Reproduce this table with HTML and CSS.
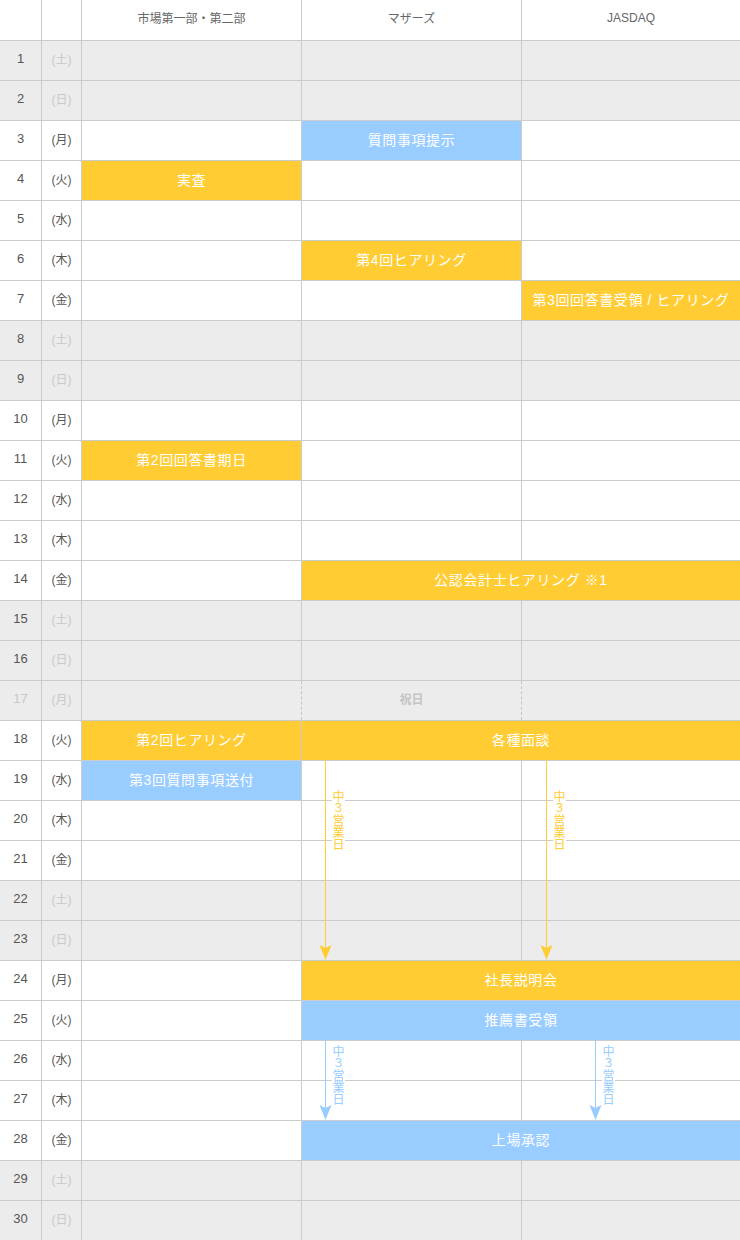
FILE: index.html
```html
<!DOCTYPE html>
<html lang="ja">
<head>
    <meta charset="UTF-8">
    <meta name="viewport" content="width=device-width, initial-scale=1.0">
    <title>上場スケジュール</title>
    <link rel="stylesheet" href="styles.css">
</head>
<body>
    <div id="calendar">
        <div class="row head">
            <div class="cell"></div>
            <div class="cell"></div>
            <div class="cell">市場第一部・第二部</div>
            <div class="cell">マザーズ</div>
            <div class="cell">JASDAQ</div>
        </div>
        <div class="row off">
            <div class="cell day">1</div><div class="cell wd">(土)</div>
            <div class="cell"></div><div class="cell"></div><div class="cell"></div>
        </div>
        <div class="row off">
            <div class="cell day">2</div><div class="cell wd">(日)</div>
            <div class="cell"></div><div class="cell"></div><div class="cell"></div>
        </div>
        <div class="row">
            <div class="cell day">3</div><div class="cell wd">(月)</div>
            <div class="cell"></div><div class="cell blue">質問事項提示</div><div class="cell"></div>
        </div>
        <div class="row">
            <div class="cell day">4</div><div class="cell wd">(火)</div>
            <div class="cell yellow">実査</div><div class="cell"></div><div class="cell"></div>
        </div>
        <div class="row">
            <div class="cell day">5</div><div class="cell wd">(水)</div>
            <div class="cell"></div><div class="cell"></div><div class="cell"></div>
        </div>
        <div class="row">
            <div class="cell day">6</div><div class="cell wd">(木)</div>
            <div class="cell"></div><div class="cell yellow">第4回ヒアリング</div><div class="cell"></div>
        </div>
        <div class="row">
            <div class="cell day">7</div><div class="cell wd">(金)</div>
            <div class="cell"></div><div class="cell"></div><div class="cell yellow">第3回回答書受領 / ヒアリング</div>
        </div>
        <div class="row off">
            <div class="cell day">8</div><div class="cell wd">(土)</div>
            <div class="cell"></div><div class="cell"></div><div class="cell"></div>
        </div>
        <div class="row off">
            <div class="cell day">9</div><div class="cell wd">(日)</div>
            <div class="cell"></div><div class="cell"></div><div class="cell"></div>
        </div>
        <div class="row">
            <div class="cell day">10</div><div class="cell wd">(月)</div>
            <div class="cell"></div><div class="cell"></div><div class="cell"></div>
        </div>
        <div class="row">
            <div class="cell day">11</div><div class="cell wd">(火)</div>
            <div class="cell yellow">第2回回答書期日</div><div class="cell"></div><div class="cell"></div>
        </div>
        <div class="row">
            <div class="cell day">12</div><div class="cell wd">(水)</div>
            <div class="cell"></div><div class="cell"></div><div class="cell"></div>
        </div>
        <div class="row">
            <div class="cell day">13</div><div class="cell wd">(木)</div>
            <div class="cell"></div><div class="cell"></div><div class="cell"></div>
        </div>
        <div class="row">
            <div class="cell day">14</div><div class="cell wd">(金)</div>
            <div class="cell"></div><div class="cell yellow span2">公認会計士ヒアリング ※1</div>
        </div>
        <div class="row off">
            <div class="cell day">15</div><div class="cell wd">(土)</div>
            <div class="cell"></div><div class="cell"></div><div class="cell"></div>
        </div>
        <div class="row off">
            <div class="cell day">16</div><div class="cell wd">(日)</div>
            <div class="cell"></div><div class="cell"></div><div class="cell"></div>
        </div>
        <div class="row off holiday">
            <div class="cell day">17</div><div class="cell wd">(月)</div>
            <div class="cell"></div><div class="cell dashed holidayText">祝日</div><div class="cell dashed"></div>
        </div>
        <div class="row">
            <div class="cell day">18</div><div class="cell wd">(火)</div>
            <div class="cell yellow">第2回ヒアリング</div><div class="cell yellow span2">各種面談</div>
        </div>
        <div class="row">
            <div class="cell day">19</div><div class="cell wd">(水)</div>
            <div class="cell blue">第3回質問事項送付</div><div class="cell"></div><div class="cell"></div>
        </div>
        <div class="row">
            <div class="cell day">20</div><div class="cell wd">(木)</div>
            <div class="cell"></div><div class="cell"></div><div class="cell"></div>
        </div>
        <div class="row">
            <div class="cell day">21</div><div class="cell wd">(金)</div>
            <div class="cell"></div><div class="cell"></div><div class="cell"></div>
        </div>
        <div class="row off">
            <div class="cell day">22</div><div class="cell wd">(土)</div>
            <div class="cell"></div><div class="cell"></div><div class="cell"></div>
        </div>
        <div class="row off">
            <div class="cell day">23</div><div class="cell wd">(日)</div>
            <div class="cell"></div><div class="cell"></div><div class="cell"></div>
        </div>
        <div class="row">
            <div class="cell day">24</div><div class="cell wd">(月)</div>
            <div class="cell"></div><div class="cell yellow span2">社長説明会</div>
        </div>
        <div class="row">
            <div class="cell day">25</div><div class="cell wd">(火)</div>
            <div class="cell"></div><div class="cell blue span2">推薦書受領</div>
        </div>
        <div class="row">
            <div class="cell day">26</div><div class="cell wd">(水)</div>
            <div class="cell"></div><div class="cell"></div><div class="cell"></div>
        </div>
        <div class="row">
            <div class="cell day">27</div><div class="cell wd">(木)</div>
            <div class="cell"></div><div class="cell"></div><div class="cell"></div>
        </div>
        <div class="row">
            <div class="cell day">28</div><div class="cell wd">(金)</div>
            <div class="cell"></div><div class="cell blue span2">上場承認</div>
        </div>
        <div class="row off">
            <div class="cell day">29</div><div class="cell wd">(土)</div>
            <div class="cell"></div><div class="cell"></div><div class="cell"></div>
        </div>
        <div class="row off">
            <div class="cell day">30</div><div class="cell wd">(日)</div>
            <div class="cell"></div><div class="cell"></div><div class="cell"></div>
        </div>

        <!-- 中3営業日 arrows -->
        <svg class="arrow yellowArrow arrowA" width="13" height="200" viewBox="0 0 13 200">
            <rect x="6" y="0" width="1" height="190"/>
            <path d="M0.5 185 L6.5 188 L12.5 185 L6.5 200 Z"/>
        </svg>
        <svg class="arrow yellowArrow arrowB" width="13" height="200" viewBox="0 0 13 200">
            <rect x="6" y="0" width="1" height="190"/>
            <path d="M0.5 185 L6.5 188 L12.5 185 L6.5 200 Z"/>
        </svg>
        <svg class="arrow blueArrow arrowC" width="13" height="80" viewBox="0 0 13 80">
            <rect x="6" y="0" width="1" height="70"/>
            <path d="M0.5 65 L6.5 68 L12.5 65 L6.5 80 Z"/>
        </svg>
        <svg class="arrow blueArrow arrowD" width="13" height="80" viewBox="0 0 13 80">
            <rect x="6" y="0" width="1" height="70"/>
            <path d="M0.5 65 L6.5 68 L12.5 65 L6.5 80 Z"/>
        </svg>
        <div class="note yellowNote noteA">中３営業日</div>
        <div class="note yellowNote noteB">中３営業日</div>
        <div class="note blueNote noteC">中３営業日</div>
        <div class="note blueNote noteD">中３営業日</div>
    </div>
</body>
</html>
```

FILE: styles.css
```css
* {
    margin: 0;
    padding: 0;
    box-sizing: border-box;
}
body {
    background-color: #fff;
    color: #555;
    font-family: 'Liberation Sans', 'Noto Sans CJK JP', sans-serif;
}
#calendar {
    position: relative;
    width: 740px;
}
.row {
    display: grid;
    grid-template-columns: 41px 40px 220px 220px 219px;
    height: 40px;
    border-top: 1px solid #ccc;
}
.row.head {
    border-top: none;
    font-size: 12px;
    color: #666;
}
.row.off {
    background-color: #ececec;
}
.cell {
    display: flex;
    justify-content: center;
    align-items: center;
    padding-bottom: 4px;
    border-left: 1px solid #ccc;
    white-space: nowrap;
}
.row.head .cell {
    padding-bottom: 5px;
}
.cell:first-child {
    border-left: none;
}
.cell.span2 {
    grid-column: span 2;
}
.day {
    font-size: 13px;
    color: #555;
}
.wd {
    font-size: 12px;
    color: #555;
}
.off .wd {
    color: #c8c8c8;
}
.holiday .day {
    color: #c8c8c8;
}
.cell.dashed {
    border-left: 1px dashed #c4c4c4;
}
.holidayText {
    font-size: 12px;
    font-weight: bold;
    color: #c4c4c4;
}
.yellow {
    background-color: #ffcc33;
    color: #fff;
    font-size: 14px;
    letter-spacing: 0.6px;
}
.blue {
    background-color: #99ccff;
    color: #fff;
    font-size: 14px;
    letter-spacing: 0.6px;
}
.arrow {
    position: absolute;
}
.yellowArrow {
    fill: #ffcc33;
}
.blueArrow {
    fill: #99ccff;
}
.arrowA {
    left: 319px;
    top: 760px;
}
.arrowB {
    left: 540px;
    top: 760px;
}
.arrowC {
    left: 319px;
    top: 1040px;
}
.arrowD {
    left: 589px;
    top: 1040px;
}
.note {
    position: absolute;
    writing-mode: vertical-rl;
    text-orientation: upright;
    font-family: 'Noto Sans CJK JP', sans-serif;
    font-size: 12px;
    line-height: 13px;
    background-color: #fff;
}
.yellowNote {
    color: #ffcc33;
    top: 790px;
}
.blueNote {
    color: #99ccff;
    top: 1045px;
}
.noteA {
    left: 332px;
}
.noteB {
    left: 553px;
}
.noteC {
    left: 332px;
}
.noteD {
    left: 602px;
}
```
